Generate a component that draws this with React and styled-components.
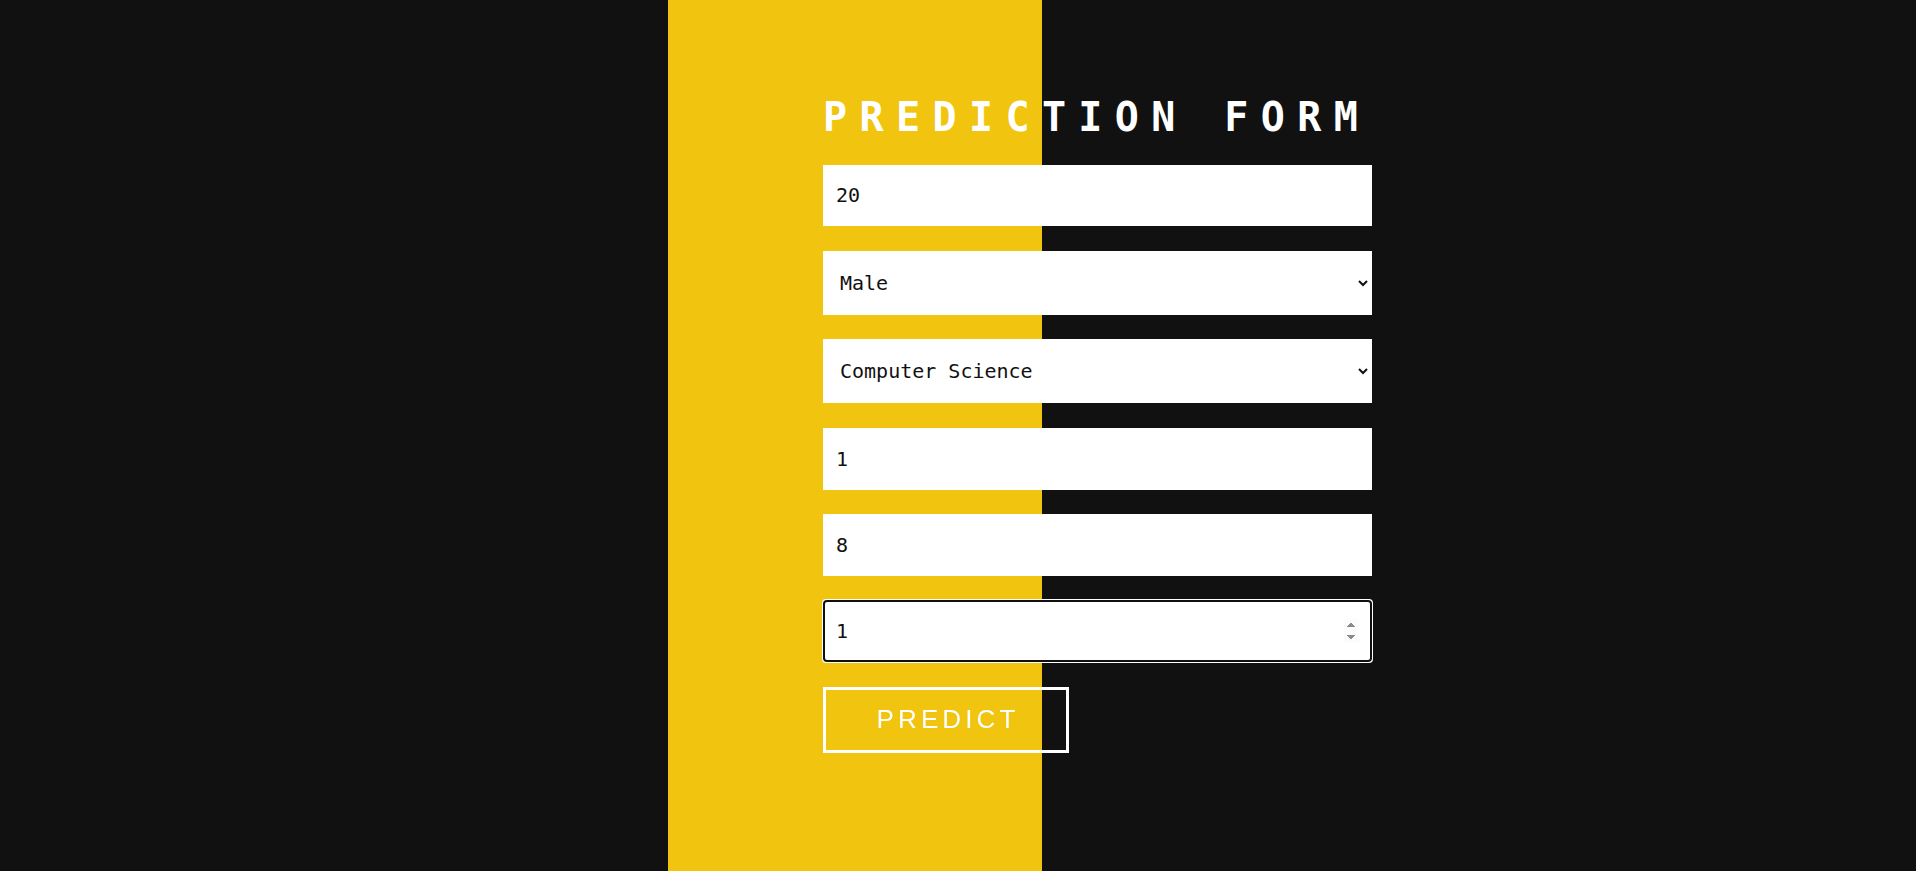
import React, { useState } from 'react';
import styled, { createGlobalStyle } from 'styled-components';

const GlobalStyle = createGlobalStyle`
  html, body {
    margin: 0;
    padding: 0;
  }

  body {
    background: #111111;
    font-family: 'DejaVu Sans Mono', monospace;
  }
`;

const Page = styled.div`
  min-height: 100vh;
  box-sizing: border-box;
  padding: 93.5px 0 40px 823px;
  background: linear-gradient(
    to right,
    #111111 0,
    #111111 668px,
    #f1c40f 668px,
    #f1c40f 1042px,
    #111111 1042px
  );
`;

const Form = styled.form`
  width: 549px;
  display: flex;
  flex-direction: column;
  align-items: flex-start;
`;

const Title = styled.h1`
  margin: 0 0 25px;
  font-family: 'DejaVu Sans Mono', monospace;
  font-size: 40px;
  font-weight: 700;
  letter-spacing: 12.4px;
  color: #ffffff;
  white-space: nowrap;
`;

const Field = styled.input`
  box-sizing: border-box;
  width: 100%;
  height: 61.5px;
  margin: 0 0 24.7px;
  padding: 0 12px;
  border: 1px solid rgba(255, 255, 255, 0.45);
  border-radius: 0;
  background: #ffffff;
  color: #111111;
  font-family: 'DejaVu Sans Mono', monospace;
  font-size: 20px;

  &:focus::-webkit-inner-spin-button {
    height: 24px;
    width: 18px;
  }
`;

const Select = styled.select`
  box-sizing: border-box;
  width: 100%;
  height: 64px;
  margin: 0 0 24.7px;
  padding: 0 12px;
  border: 1px solid rgba(255, 255, 255, 0.45);
  border-radius: 0;
  background: #ffffff;
  color: #111111;
  font-family: 'DejaVu Sans Mono', monospace;
  font-size: 20px;
`;

const SubmitButton = styled.button`
  box-sizing: border-box;
  width: 246px;
  height: 66px;
  margin-top: 0;
  padding: 0 0 0 4px;
  border: 1px solid #ffffff;
  box-shadow: inset 0 0 0 1px rgba(255, 255, 255, 0.45), inset 0 0 0 2px #ffffff;
  background: transparent;
  color: #ffffff;
  font-family: 'Liberation Sans', Arial, sans-serif;
  font-size: 26px;
  letter-spacing: 4.1px;
  cursor: pointer;

  &:hover {
    opacity: 0.85;
  }
`;

const App = () => {
  const [values, setValues] = useState({
    age: '20',
    gender: 'Male',
    major: 'Computer Science',
    year: '1',
    hours: '8',
    extra: '1',
  });

  const update = (key) => (e) => setValues({ ...values, [key]: e.target.value });

  const handleSubmit = (e) => {
    e.preventDefault();
  };

  return (
    <>
      <GlobalStyle />
      <Page>
        <Form onSubmit={handleSubmit}>
          <Title>PREDICTION FORM</Title>
          <Field type='number' value={values.age} onChange={update('age')} />
          <Select value={values.gender} onChange={update('gender')}>
            <option>Male</option>
            <option>Female</option>
          </Select>
          <Select value={values.major} onChange={update('major')}>
            <option>Computer Science</option>
            <option>Mathematics</option>
            <option>Physics</option>
          </Select>
          <Field type='number' value={values.year} onChange={update('year')} />
          <Field type='number' value={values.hours} onChange={update('hours')} />
          <Field type='number' value={values.extra} onChange={update('extra')} autoFocus />
          <SubmitButton type='submit'>PREDICT</SubmitButton>
        </Form>
      </Page>
    </>
  );
};

export default App;
